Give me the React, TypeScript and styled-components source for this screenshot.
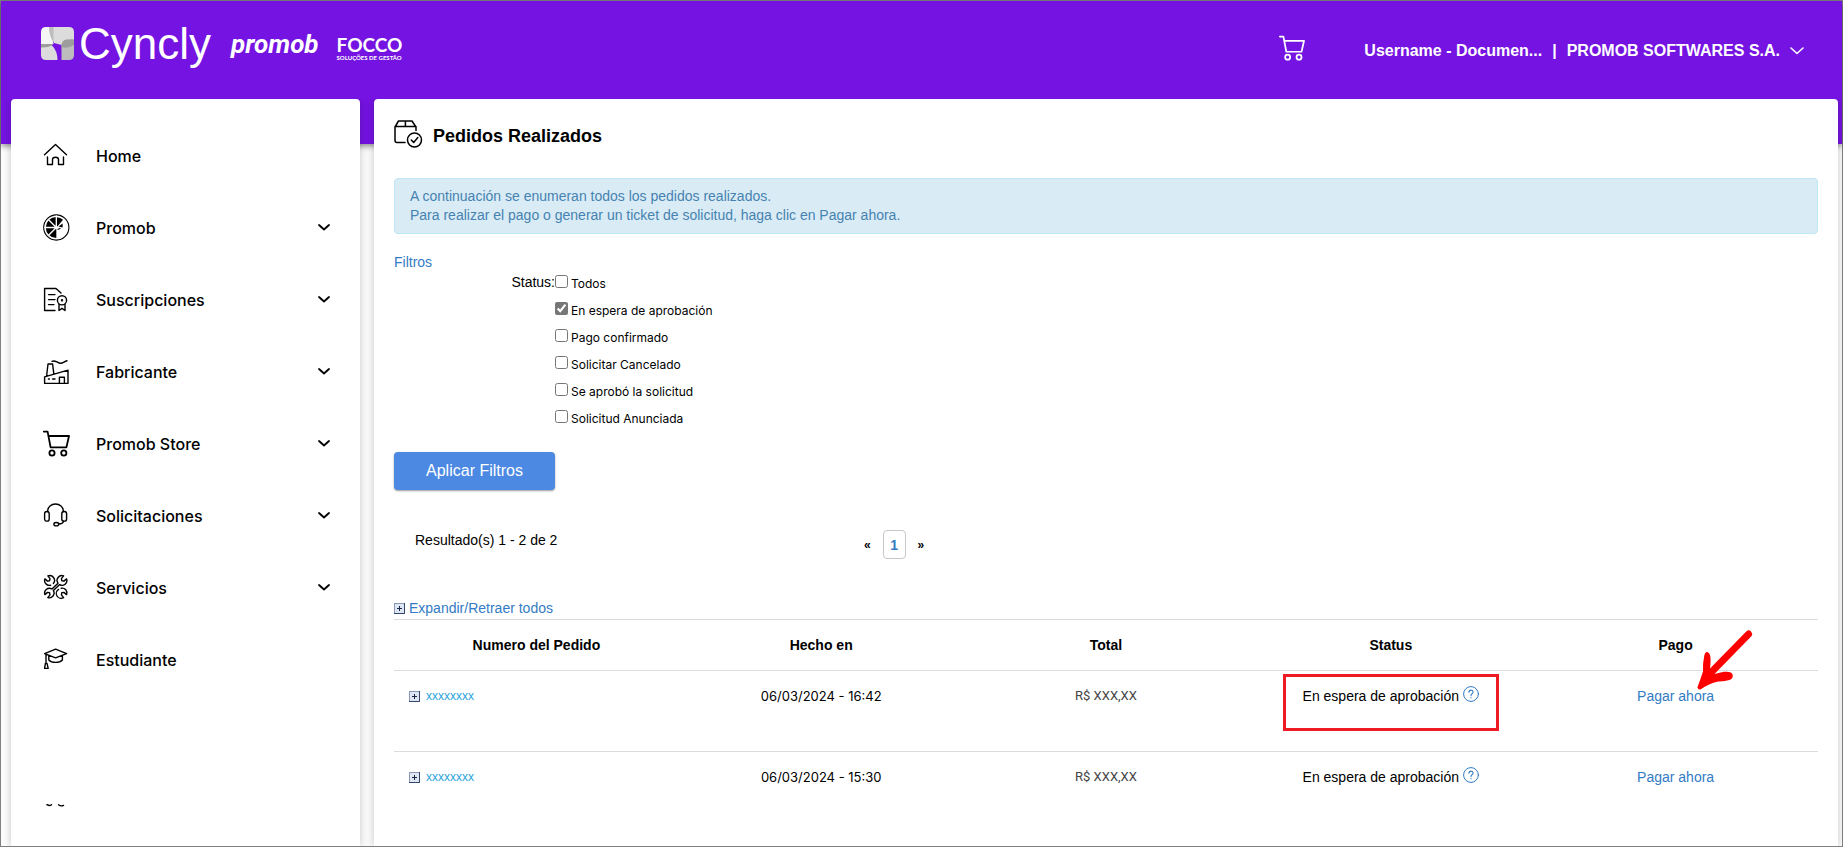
import React, { useState } from 'react';
import styled, { createGlobalStyle, css } from 'styled-components';

const color = {
  purple: '#7513e2',
  link: '#337bc4',
  line: '#dcdcdc',
  frame: '#808080',
};

const GlobalStyle = createGlobalStyle`
  *, *::before, *::after { box-sizing: border-box; }
  body {
    margin: 0;
    font-family: "Liberation Sans", Arial, sans-serif;
    font-size: 14px;
    line-height: 20px;
    color: #000;
    background: #fcfcfc;
  }
  svg { display: block; flex: none; }
`;

const Page = styled.div`
  display: flex;
  flex-direction: column;
  min-height: 100vh;
  border: 1px solid ${color.frame};
`;

const Header = styled.header`
  display: flex;
  justify-content: space-between;
  align-items: flex-start;
  height: 143px;
  padding: 26px 38px 0 40px;
  color: #fff;
  background: ${color.purple};
  box-shadow: 0 2px 6px rgba(0, 0, 0, 0.45);
`;

const Brands = styled.div`
  display: flex;
  align-items: flex-start;
`;

const CynclyName = styled.span`
  margin: -3px 0 0 5px;
  font-size: 44px;
  line-height: 40px;
`;

const PromobName = styled.span`
  margin-left: 20px;
  font: italic 700 26px/34px Roboto, sans-serif;
`;

const Focco = styled.div`
  display: flex;
  flex-direction: column;
  margin: 8px 0 0 18px;
  font-family: Lato, sans-serif;
  font-weight: 700;
`;

const FoccoName = styled.span`
  font-size: 19px;
  line-height: 19px;
`;

const FoccoTag = styled.span`
  font-size: 6px;
  line-height: 7px;
`;

const Account = styled.div`
  display: flex;
  align-items: flex-start;
  gap: 59px;
  padding-top: 8px;
`;

const IconButton = styled.button`
  padding: 0;
  border: 0;
  background: none;
  color: inherit;
  cursor: pointer;
`;

const UserButton = styled(IconButton)`
  display: flex;
  align-items: center;
  gap: 10px;
  padding-top: 5px;
  font: 700 16px/22px "Liberation Sans", Arial, sans-serif;
`;

const Columns = styled.div`
  display: flex;
  flex: 1;
  gap: 14px;
  margin-top: -45px;
  padding: 0 4px 0 10px;
`;

const card = css`
  background: #fff;
  border-radius: 4px 4px 0 0;
  box-shadow: 0 0 8px rgba(0, 0, 0, 0.22);
  clip-path: inset(0 -12px 0 -12px);
`;

const Sidebar = styled.aside`
  ${card}
  flex: none;
  width: 349px;
  padding: 20px 0;
`;

const MenuList = styled.ul`
  margin: 0 0 109px;
  padding: 0;
  list-style: none;
`;

const menuRow = css`
  display: flex;
  align-items: center;
  gap: 25px;
  width: 100%;
  height: 72px;
  padding: 1px 30px 0 32px;
  border: 0;
  background: none;
  color: #000;
  font: 500 16px/24px Inter, sans-serif;
  text-align: left;
  text-decoration: none;
  cursor: pointer;
`;

const MenuLink = styled.a`${menuRow}`;
const MenuButton = styled.button`${menuRow}`;
const MenuText = styled.span`flex: 1;`;

const NextIcon = styled.svg`
  margin-left: 34px;
`;

const Main = styled.main`
  ${card}
  flex: 1;
  min-width: 0;
  padding: 20px 20px 0;
`;

const TitleRow = styled.div`
  display: flex;
  align-items: flex-end;
  gap: 10px;
  margin-bottom: 30px;
`;

const Title = styled.h1`
  margin: 0;
  font: 700 18px/24px "Liberation Sans", Arial, sans-serif;
`;

const Notice = styled.p`
  margin: 0 0 18px;
  padding: 8px 15px;
  border: 1px solid #bce8f1;
  border-radius: 4px;
  background: #d9ecf6;
  color: #4682b0;
  line-height: 19px;
`;

const Link = styled.a`
  color: ${color.link};
  text-decoration: none;
`;

const FilterRow = styled.div`
  display: flex;
`;

const FilterName = styled.div`
  width: 161px;
  text-align: right;
`;

const Option = styled.label`
  display: flex;
  align-items: flex-start;
  gap: 3px;
  height: 27px;
  padding-top: 3px;
  font: 12px/17px Inter, sans-serif;
`;

const Checkbox = styled.input`
  width: 13px;
  height: 13px;
  margin: 0;
  accent-color: #767676;
`;

const ApplyButton = styled.button`
  display: block;
  width: 161px;
  height: 38px;
  margin-top: 18px;
  border: 0;
  border-radius: 4px;
  background: #4b89e3;
  box-shadow: 0 1px 2px rgba(0, 0, 0, 0.4);
  color: #fff;
  font: 16px/20px "Liberation Sans", Arial, sans-serif;
  cursor: pointer;
`;

const Results = styled.div`
  display: grid;
  grid-template-columns: 33% 1fr;
  margin: 40px 0;
`;

const ResultCount = styled.div`
  padding-left: 21px;
`;

const Pager = styled.nav`
  display: flex;
  align-items: center;
  gap: 12px;
`;

const PageStep = styled.a`
  color: #000;
  font-size: 12px;
  font-weight: 700;
  text-decoration: none;
`;

const PageNumber = styled.a`
  width: 23px;
  height: 29px;
  border: 1px solid #c8c8c8;
  border-radius: 4px;
  color: ${color.link};
  font-weight: 700;
  line-height: 28px;
  text-align: center;
  text-decoration: none;
`;

const ExpandAll = styled(Link)`
  display: inline-flex;
  align-items: center;
  gap: 4px;
  line-height: 19px;
  vertical-align: top;
`;

const Orders = styled.table`
  width: 100%;
  table-layout: fixed;
  border-spacing: 0;
  text-align: center;
`;

const HeadCell = styled.th`
  height: 51px;
  padding: 0;
  border-top: 1px solid ${color.line};
`;

const Cell = styled.td`
  height: 81px;
  padding: 15px 0 0;
  border-top: 1px solid ${color.line};
  vertical-align: top;
`;

const DateCell = styled(Cell)`
  font-family: Inter, sans-serif;
  font-size: 13px;
`;

const TotalCell = styled(Cell)`
  color: #444;
  font-family: Roboto, sans-serif;
  font-size: 13px;
`;

const OrderId = styled.div`
  display: flex;
  align-items: center;
  gap: 6px;
  padding-left: 15px;
`;

const OrderLink = styled(Link)`
  color: #29a3dc;
  font-size: 12px;
`;

const StatusText = styled.span`
  position: relative;
  display: inline-flex;
  align-items: flex-start;
  gap: 4px;
`;

const Highlight = styled.span`
  position: absolute;
  inset: -12px -20px -25px;
  border: 3px solid #ed1c24;
  pointer-events: none;
`;

const PayBox = styled.span`
  position: relative;
  display: inline-block;
`;

const Arrow = styled.svg`
  position: absolute;
  right: -40px;
  bottom: 15px;
  pointer-events: none;
`;

const stroke = {
  fill: 'none',
  stroke: 'currentColor',
  strokeLinecap: 'round' as const,
  strokeLinejoin: 'round' as const,
};

const MenuIcon = ({ children, weight = 1.4 }: { children: React.ReactNode; weight?: number }) => (
  <svg width="28" height="28" viewBox="0 0 28 28" strokeWidth={weight} {...stroke} aria-hidden="true">
    {children}
  </svg>
);

const Chevron = ({ width, weight }: { width: number; weight: number }) => (
  <svg width={width} height="10" viewBox={`0 0 ${width} 10`} strokeWidth={weight} {...stroke} aria-hidden="true">
    <path d={`M1 2L${width / 2} ${width / 2 + 0.5}L${width - 1} 2`} />
  </svg>
);

const cartShape = (
  <>
    <path d="M.8 1.6H4.6L7.6 17.4H23.4L26 6H5.5" />
    <circle cx="9" cy="23" r="2.6" />
    <circle cx="20.8" cy="23" r="2.6" />
  </>
);

const HomeIcon = () => (
  <MenuIcon>
    <path d="M1.5 12.8L12.5 2.5L23.5 12.8M4.5 15V22.5H9.5V17.5Q9.5 15.3 12.5 15.3Q15.5 15.3 15.5 17.5V22.5H20.5V15" />
  </MenuIcon>
);

const PromobIcon = () => (
  <MenuIcon weight={1.1}>
    <circle cx="13.3" cy="13.5" r="12.6" />
    <path d="M13.3 3A10.5 10.5 0 0 0 13.3 24Z" fill="currentColor" stroke="none" />
    <path d="M14 13V3.2A10.4 10.4 0 0 1 20 5.8Z" fill="currentColor" stroke="none" />
    <path d="M15.5 12.4L19.6 9.4V13.6Z" fill="currentColor" stroke="none" />
    <path d="M13.3 13.5L5.6 5.8M13.3 13.5H2M13.3 13.5L5.6 21.2M13.3 13.5V2" stroke="#fff" strokeWidth="1.3" />
    <circle cx="13.3" cy="13.5" r="1.7" fill="#fff" stroke="none" />
    <path d="M15 15.2L17 14.4" />
  </MenuIcon>
);

const SubscriptionIcon = () => (
  <MenuIcon>
    <path d="M12 24.5H1.6V2.5H13L18 7M5.5 8.6H12M5.5 13.6H12M5.5 18.6H11" />
    <circle cx="19" cy="14.3" r="4.6" />
    <circle cx="19" cy="14.3" r=".5" />
    <path d="M16 18.2V24.5L19 22.4L22 24.5V18.2" />
  </MenuIcon>
);

const FactoryIcon = () => (
  <MenuIcon>
    <path d="M9 3.3C12 1.8 14 4.8 17 5.2S21 3.4 24 2.8" />
    <path d="M3.6 18L5 6H9.6L10.8 15.6M1.6 18.8L25 12.2V25.4H1.6ZM16.4 25.4V19.2H21.4V25.4" />
    <path d="M5.4 21H6.4M9.6 21H12" />
  </MenuIcon>
);

const StoreIcon = () => <MenuIcon weight={1.8}>{cartShape}</MenuIcon>;

const HeadsetIcon = () => (
  <MenuIcon>
    <path d="M4.6 9.5C4.8 5 8.2 2 12.5 2S20.2 5 20.4 9.5M20.6 19.2Q20 22 15.8 22" />
    <rect x="1.6" y="9.5" width="4.6" height="9.6" rx="2.2" />
    <rect x="18.8" y="9.5" width="4.8" height="9.6" rx="2.2" />
    <ellipse cx="13.3" cy="22.2" rx="2.4" ry="1.7" />
  </MenuIcon>
);

const ToolsIcon = () => (
  <MenuIcon>
    <path d="M15 9.2A4.8 4.8 0 0 1 20.6 1.9L18.4 4.6L18.8 6.7L20.9 7.1L23.6 4.9A4.8 4.8 0 0 1 16.6 10.6L10.4 16.6A4.8 4.8 0 0 1 4.8 23.6L7 20.9L6.6 18.8L4.5 18.4L1.9 20.6A4.8 4.8 0 0 1 9 15Z" />
    <path d="M10.4 9.4A4.8 4.8 0 0 0 4.9 1.9L7 4.6L6.6 6.7L4.5 7.1L1.9 4.9A4.8 4.8 0 0 0 7.6 11.2" />
    <path d="M15.6 15.4A4.8 4.8 0 0 0 20.6 23.6L18.4 20.9L18.8 18.8L20.9 18.4L23.6 20.6A4.8 4.8 0 0 0 18.2 14.2" />
  </MenuIcon>
);

const StudentIcon = () => (
  <MenuIcon>
    <path d="M1.6 7.6L12.6 3.2L23.6 7.6L12.6 11.8ZM5.8 9.4V14Q8 16.4 12.6 16.4T19.4 14V9.4M3 8.4V17.2M2.4 17.4H4L5.2 22.4H1.6Z" />
  </MenuIcon>
);

const OrdersIcon = () => (
  <svg width="29" height="29" viewBox="0 0 29 29" strokeWidth="1.5" {...stroke} aria-hidden="true">
    <path d="M11 23.5H3Q1 23.5 1 21.5V8L4.5 2H18L22 8V11.5M1 7.6H22M11.4 2V7.6" />
    <circle cx="20.5" cy="21" r="7" />
    <path d="M17.3 21L19.7 23.4L23.8 18.6" />
  </svg>
);

const CynclyMark = () => (
  <svg width="33" height="33" viewBox="0 0 33 33" aria-hidden="true">
    <path d="M5 0H11Q11 10 12.5 17L0 17V5Q0 0 5 0Z" fill="#f5f5f5" />
    <path d="M9 0H28Q33 0 33 5V13Q25 12 20.5 18L13 16Q9 9 9 0Z" fill="#dcdcdc" />
    <path d="M8 0H12.5V15Q8 9 8 0Z" fill="#bdbdbd" />
    <path d="M0 17H12L9.5 21H0Z" fill="#9d9d9d" />
    <path d="M0 20.5Q6 21 11 18.6Q16.5 24 16.5 33H5Q0 33 0 28Z" fill="#dcdcdc" />
    <path d="M20.5 18Q21 12.5 27 12.5H33V28Q33 33 28 33H20.5Z" fill="#bdbdbd" />
    <path d="M20.5 20Q20.5 12.5 26 12.5H33V18Q26 22 20.5 20Z" fill="#9d9d9d" />
  </svg>
);

const PlusBox = () => (
  <svg width="11" height="11" viewBox="0 0 11 11" aria-hidden="true">
    <rect x=".5" y=".5" width="10" height="10" fill="#dfe6f3" stroke="#8a97b8" />
    <path d="M10.5 0V10.5H0" fill="none" stroke="#34456b" />
    <path d="M5.5 3V8M3 5.5H8" stroke="#1a2746" />
  </svg>
);

const HelpIcon = () => (
  <svg width="16" height="16" viewBox="0 0 16 16" {...stroke} aria-hidden="true">
    <circle cx="8" cy="8" r="7.4" stroke="#337bc4" />
    <path d="M5.9 6.2Q6 4.1 8 4.1T10.1 6.1Q10.1 7.2 9 7.8T8 9.6M8 11.6V11.8" stroke="#337bc4" strokeWidth="1.1" />
  </svg>
);

type Item = { label: string; Icon: React.ComponentType; expands?: boolean };

const menu: Item[] = [
  { label: 'Home', Icon: HomeIcon },
  { label: 'Promob', Icon: PromobIcon, expands: true },
  { label: 'Suscripciones', Icon: SubscriptionIcon, expands: true },
  { label: 'Fabricante', Icon: FactoryIcon, expands: true },
  { label: 'Promob Store', Icon: StoreIcon, expands: true },
  { label: 'Solicitaciones', Icon: HeadsetIcon, expands: true },
  { label: 'Servicios', Icon: ToolsIcon, expands: true },
  { label: 'Estudiante', Icon: StudentIcon },
];

const statuses = [
  'Todos',
  'En espera de aprobación',
  'Pago confirmado',
  'Solicitar Cancelado',
  'Se aprobó la solicitud',
  'Solicitud Anunciada',
];

const orders = [
  { date: '06/03/2024 - 16:42', marked: true },
  { date: '06/03/2024 - 15:30', marked: false },
];

export default function App() {
  const [checked, setChecked] = useState<string[]>(['En espera de aprobación']);
  const toggle = (name: string) =>
    setChecked(list => (list.includes(name) ? list.filter(item => item !== name) : [...list, name]));

  return (
    <>
      <GlobalStyle />
      <Page>
        <Header>
          <Brands>
            <CynclyMark />
            <CynclyName>Cyncly</CynclyName>
            <PromobName>promob</PromobName>
            <Focco>
              <FoccoName>FOCCO</FoccoName>
              <FoccoTag>SOLUÇÕES DE GESTÃO</FoccoTag>
            </Focco>
          </Brands>
          <Account>
            <IconButton aria-label="Carrito">
              <svg width="26" height="26" viewBox="0 0 27 27" strokeWidth="1.8" {...stroke} aria-hidden="true">
                {cartShape}
              </svg>
            </IconButton>
            <UserButton>
              <span>Username - Documen...</span>
              <span>|</span>
              <span>PROMOB SOFTWARES S.A.</span>
              <Chevron width={14} weight={1.6} />
            </UserButton>
          </Account>
        </Header>

        <Columns>
          <Sidebar>
            <nav>
              <MenuList>
                {menu.map(({ label, Icon, expands }) => (
                  <li key={label}>
                    {expands ? (
                      <MenuButton aria-expanded={false}>
                        <Icon />
                        <MenuText>{label}</MenuText>
                        <Chevron width={12} weight={1.8} />
                      </MenuButton>
                    ) : (
                      <MenuLink href="#">
                        <Icon />
                        <MenuText>{label}</MenuText>
                      </MenuLink>
                    )}
                  </li>
                ))}
              </MenuList>
            </nav>
            <NextIcon width="21" height="3" viewBox="0 0 21 3" strokeWidth="1.4" {...stroke} aria-hidden="true">
              <path d="M2 .6Q4.5 2.4 6.5 .8M13.5 .8Q16 2.6 18.5 1.4" />
            </NextIcon>
          </Sidebar>

          <Main>
            <TitleRow>
              <OrdersIcon />
              <Title>Pedidos Realizados</Title>
            </TitleRow>
            <Notice>
              A continuación se enumeran todos los pedidos realizados.
              <br />
              Para realizar el pago o generar un ticket de solicitud, haga clic en Pagar ahora.
            </Notice>

            <Link href="#">Filtros</Link>
            <FilterRow role="group" aria-labelledby="status-name">
              <FilterName id="status-name">Status:</FilterName>
              <div>
                {statuses.map(name => (
                  <Option key={name}>
                    <Checkbox type="checkbox" checked={checked.includes(name)} onChange={() => toggle(name)} />
                    {name}
                  </Option>
                ))}
              </div>
            </FilterRow>
            <ApplyButton>Aplicar Filtros</ApplyButton>

            <Results>
              <ResultCount>Resultado(s) 1 - 2 de 2</ResultCount>
              <Pager>
                <PageStep href="#">«</PageStep>
                <PageNumber href="#">1</PageNumber>
                <PageStep href="#">»</PageStep>
              </Pager>
            </Results>

            <ExpandAll href="#">
              <PlusBox />
              Expandir/Retraer todos
            </ExpandAll>
            <Orders>
              <thead>
                <tr>
                  <HeadCell>Numero del Pedido</HeadCell>
                  <HeadCell>Hecho en</HeadCell>
                  <HeadCell>Total</HeadCell>
                  <HeadCell>Status</HeadCell>
                  <HeadCell>Pago</HeadCell>
                </tr>
              </thead>
              <tbody>
                {orders.map(({ date, marked }) => (
                  <tr key={date}>
                    <Cell>
                      <OrderId>
                        <IconButton aria-label="Expandir pedido">
                          <PlusBox />
                        </IconButton>
                        <OrderLink href="#">xxxxxxxx</OrderLink>
                      </OrderId>
                    </Cell>
                    <DateCell>{date}</DateCell>
                    <TotalCell>R$ XXX,XX</TotalCell>
                    <Cell>
                      <StatusText>
                        En espera de aprobación
                        <HelpIcon />
                        {marked && <Highlight />}
                      </StatusText>
                    </Cell>
                    <Cell>
                      <PayBox>
                        <Link href="#">Pagar ahora</Link>
                        {marked && (
                          <Arrow width="58" height="62" viewBox="0 0 58 62" fill="red" aria-hidden="true">
                            <path d="M50.5 2.2Q53 .4 55 2.4T55.6 7L18.5 45Q24 43.6 28 42.8Q34.5 42 36.4 45Q38 49 33.5 51Q28.5 52.6 22 52.4Q13 54.5 4.8 60.2Q2.4 61.2 1.4 58.4Q4.6 50 7 42.6Q6.6 35 8.2 27Q9 22.6 11.4 23Q14.6 24 14.6 31Q14.6 35 14 39.6Z" />
                          </Arrow>
                        )}
                      </PayBox>
                    </Cell>
                  </tr>
                ))}
              </tbody>
            </Orders>
          </Main>
        </Columns>
      </Page>
    </>
  );
}
